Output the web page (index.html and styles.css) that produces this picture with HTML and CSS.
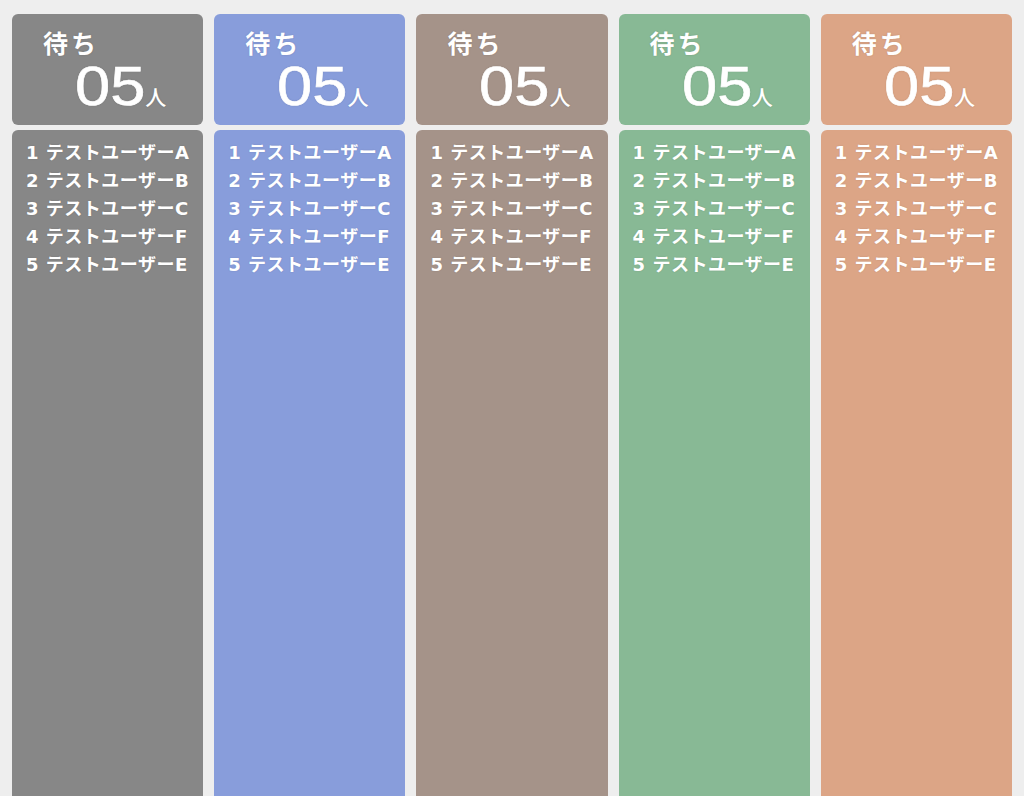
FILE: index.html
```html
<!DOCTYPE html>
<html lang="ja">
<head>
<meta charset="utf-8">
<title>待ち</title>
<link rel="stylesheet" href="styles.css">
</head>
<body>
<div class="board">
  <section class="col gray">
    <div class="head"><div class="label">待ち</div><div class="count"><span class="num">05</span><span class="unit">人</span></div></div>
    <ol class="list"><li>1 テストユーザーA</li><li>2 テストユーザーB</li><li>3 テストユーザーC</li><li>4 テストユーザーF</li><li>5 テストユーザーE</li></ol>
  </section>
  <section class="col blue">
    <div class="head"><div class="label">待ち</div><div class="count"><span class="num">05</span><span class="unit">人</span></div></div>
    <ol class="list"><li>1 テストユーザーA</li><li>2 テストユーザーB</li><li>3 テストユーザーC</li><li>4 テストユーザーF</li><li>5 テストユーザーE</li></ol>
  </section>
  <section class="col brown">
    <div class="head"><div class="label">待ち</div><div class="count"><span class="num">05</span><span class="unit">人</span></div></div>
    <ol class="list"><li>1 テストユーザーA</li><li>2 テストユーザーB</li><li>3 テストユーザーC</li><li>4 テストユーザーF</li><li>5 テストユーザーE</li></ol>
  </section>
  <section class="col green">
    <div class="head"><div class="label">待ち</div><div class="count"><span class="num">05</span><span class="unit">人</span></div></div>
    <ol class="list"><li>1 テストユーザーA</li><li>2 テストユーザーB</li><li>3 テストユーザーC</li><li>4 テストユーザーF</li><li>5 テストユーザーE</li></ol>
  </section>
  <section class="col orange">
    <div class="head"><div class="label">待ち</div><div class="count"><span class="num">05</span><span class="unit">人</span></div></div>
    <ol class="list"><li>1 テストユーザーA</li><li>2 テストユーザーB</li><li>3 テストユーザーC</li><li>4 テストユーザーF</li><li>5 テストユーザーE</li></ol>
  </section>
</div>
</body>
</html>
```
FILE: styles.css
```css
html, body {
  margin: 0;
  padding: 0;
  background: #eeeeee;
  overflow: hidden;
}
body {
  font-family: "Noto Sans CJK JP", "Noto Sans", sans-serif;
  color: #ffffff;
}
.board {
  display: flex;
  gap: 11px;
  padding: 14px 12px 0 12px;
}
.col {
  flex: 1;
  display: flex;
  flex-direction: column;
  gap: 5px;
  min-width: 0;
}
.head {
  height: 111px;
  box-sizing: border-box;
  border-radius: 6px;
  padding: 12px 0 0 31px;
  text-shadow: 0 0 2px rgba(0,0,0,0.15);
}
.label {
  font-size: 25px;
  font-weight: 700;
  line-height: 32px;
  letter-spacing: 3px;
}
.count {
  display: flex;
  align-items: baseline;
  padding-left: 32px;
  height: 60px;
}
.num {
  display: inline-block;
  font-family: "Liberation Sans", Arial, sans-serif;
  font-weight: 400;
  font-size: 55px;
  line-height: 56px;
  transform: scaleX(1.15);
  transform-origin: left center;
  margin-right: 9px;
  -webkit-text-stroke: 0.6px #ffffff;
}
.unit {
  font-size: 21px;
  font-weight: 500;
}
.list {
  list-style: none;
  margin: 0;
  padding: 9px 0 0 14px;
  height: 700px;
  border-radius: 6px 6px 0 0;
  font-family: "DejaVu Sans", "Noto Sans CJK JP", sans-serif;
  font-size: 18px;
  font-weight: 700;
  line-height: 28px;
  letter-spacing: 0.5px;
  white-space: nowrap;
  text-shadow: 0 0 2px rgba(0,0,0,0.12);
}
.gray .head, .gray .list { background: #878787; }
.blue .head, .blue .list { background: #889ddb; }
.brown .head, .brown .list { background: #a59389; }
.green .head, .green .list { background: #88b995; }
.orange .head, .orange .list { background: #dca586; }
```
